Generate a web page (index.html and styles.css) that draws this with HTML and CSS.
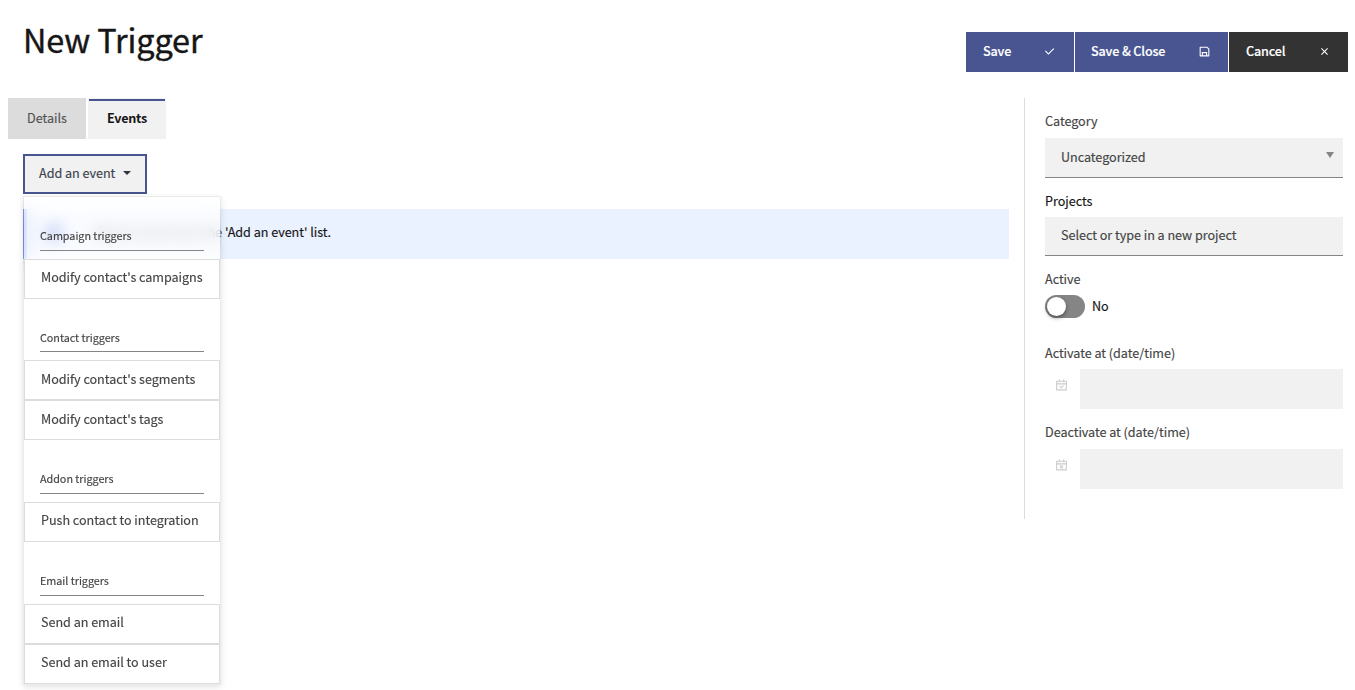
FILE: index.html
```
<!DOCTYPE html>
<html lang="en">
<head>
<meta charset="utf-8">
<title>New Trigger</title>
<link rel="stylesheet" href="styles.css">
</head>
<body>
<header class="page-header">
  <h1 class="page-title">New Trigger</h1>
  <div class="toolbar">
    <button class="btn btn-save"><span>Save</span><svg class="icon" viewBox="0 0 24 24"><path d="M10 15.17l9.19-9.19 1.42 1.41L10 18 3.64 11.64l1.41-1.42z"/></svg></button>
    <button class="btn btn-close"><span>Save &amp; Close</span><svg class="icon" viewBox="0 0 24 24"><path d="M7 19v-6h10v6h2V7.83L16.17 5H5v14h2zM4 3h13l4 4v13a1 1 0 0 1-1 1H4a1 1 0 0 1-1-1V4a1 1 0 0 1 1-1zm5 12v4h6v-4H9z"/></svg></button>
    <button class="btn btn-cancel"><span>Cancel</span><svg class="icon" viewBox="0 0 24 24"><path d="M12 10.59l4.95-4.95 1.41 1.41L13.41 12l4.95 4.95-1.41 1.41L12 13.41l-4.95 4.95-1.41-1.41L10.59 12 5.64 7.05l1.41-1.41z"/></svg></button>
  </div>
</header>
<div class="layout">
  <main class="main">
    <nav class="tabs">
      <a class="tab">Details</a>
      <a class="tab tab-active">Events</a>
    </nav>
    <section class="pane">
      <div class="dropdown">
        <button class="dropdown-toggle">Add an event<span class="caret"></span></button>
        <div class="menu">
          <h6 class="menu-header"><span>Campaign triggers</span></h6>
          <a class="menu-item">Modify contact's campaigns</a>
          <h6 class="menu-header"><span>Contact triggers</span></h6>
          <a class="menu-item">Modify contact's segments</a>
          <a class="menu-item">Modify contact's tags</a>
          <h6 class="menu-header"><span>Addon triggers</span></h6>
          <a class="menu-item">Push contact to integration</a>
          <h6 class="menu-header"><span>Email triggers</span></h6>
          <a class="menu-item">Send an email</a>
          <a class="menu-item">Send an email to user</a>
        </div>
      </div>
      <div class="notice">
        <svg class="notice-icon" viewBox="0 0 20 20"><circle cx="10" cy="10" r="8.5"/></svg>
        <p class="notice-text"><span class="notice-lead">Add an event from the</span><span>'Add an event' list.</span></p>
      </div>
    </section>
  </main>
  <aside class="sidebar">
    <label class="label">Category</label>
    <div class="field select"><span>Uncategorized</span><span class="arrow"></span></div>
    <label class="label label-dark">Projects</label>
    <div class="field field-projects"><span>Select or type in a new project</span></div>
    <label class="label label-active">Active</label>
    <div class="switch-row"><span class="switch"><span class="knob"></span></span><span class="switch-text">No</span></div>
    <label class="label label-date">Activate at (date/time)</label>
    <div class="date-row"><span class="date-addon"><svg class="icon-date" viewBox="0 0 24 24"><path d="M9 1v2h6V1h2v2h4a1 1 0 0 1 1 1v16a1 1 0 0 1-1 1H3a1 1 0 0 1-1-1V4a1 1 0 0 1 1-1h4V1h2zm11 9H4v9h16v-9zm-4.96 1.14l1.41 1.41-4.95 4.95-3.53-3.54 1.41-1.41 2.12 2.12 3.54-3.53zM7 5H4v3h16V5h-3v1h-2V5H9v1H7V5z"/></svg></span><span class="date-input"></span></div>
    <label class="label">Deactivate at (date/time)</label>
    <div class="date-row"><span class="date-addon"><svg class="icon-date" viewBox="0 0 24 24"><path d="M9 1v2h6V1h2v2h4a1 1 0 0 1 1 1v16a1 1 0 0 1-1 1H3a1 1 0 0 1-1-1V4a1 1 0 0 1 1-1h4V1h2zm11 9H4v9h16v-9zM9.88 10.96L12 13.08l2.12-2.12 1.42 1.42-2.13 2.12 2.13 2.12-1.42 1.42L12 15.92l-2.12 2.12-1.42-1.42 2.13-2.12-2.13-2.12zM7 5H4v3h16V5h-3v1h-2V5H9v1H7V5z"/></svg></span><span class="date-input"></span></div>
  </aside>
</div>
</body>
</html>
```
FILE: styles.css
```
* { box-sizing: border-box; }
body {
  margin: 0;
  height: 690px;
  overflow: hidden;
  background: #fff;
  color: #161616;
  font: 400 12.6px/18px "Noto Sans CJK SC", "Noto Sans", sans-serif;
  letter-spacing: -0.03px;
  -webkit-text-stroke: 0.15px currentColor;
}
button { font: inherit; letter-spacing: inherit; border: 0; text-align: left; }
.page-header {
  display: flex;
  justify-content: space-between;
  align-items: flex-start;
  height: 98px;
  padding: 15px 7px 0 23px;
}
.page-title { margin: 0; font-size: 32.4px; line-height: 48px; font-weight: 400; letter-spacing: -0.1px; -webkit-text-stroke: 0.4px currentColor; }
.toolbar { display: flex; gap: 1px; padding-top: 17px; }
.btn {
  display: flex;
  align-items: center;
  justify-content: space-between;
  height: 40px;
  padding: 0 17px 2px 17px;
  color: #fff;
  font-weight: 500;
  letter-spacing: -0.15px;
  background: #485590;
}
.btn-save { width: 108px; padding-right: 18px; }
.btn-close { width: 153px; padding-left: 16px; }
.btn-cancel { width: 119px; background: #333; }
.icon { width: 13px; height: 13px; margin-top: 1px; fill: #fff; }
.layout { display: flex; }
.main { width: 1024px; }
.tabs { display: flex; gap: 2px; padding-left: 8px; }
.tab {
  width: 78px;
  height: 41px;
  line-height: 40px;
  text-align: center;
  background: #dcdcdc;
  color: #525252;
}
.tab-active {
  position: relative;
  background: #f1f1f1;
  color: #161616;
  font-weight: 700;
  letter-spacing: -0.25px;
  -webkit-text-stroke: 0;
}
.tab-active::before {
  content: "";
  position: absolute;
  top: 1px;
  left: 1px;
  right: 1px;
  height: 2px;
  background: #485590;
}
.pane { padding: 15px 15px 0 23px; }
.dropdown { position: relative; height: 40px; }
.dropdown-toggle {
  display: flex;
  align-items: center;
  gap: 8px;
  width: 124px;
  height: 40px;
  padding: 0 12px 2px 14px;
  white-space: nowrap;
  background: #f1f1f1;
  border: 2px solid #485590;
  color: #3a444e;
}
.caret { border: 4px solid transparent; border-top-color: #30343c; border-bottom: 0; }
.menu {
  position: absolute;
  top: 42px;
  left: 0;
  z-index: 2;
  width: 198px;
  border: 1px solid rgba(0, 0, 0, 0.08);
  background: rgba(255, 255, 255, 0.7);
  background-clip: padding-box;
  backdrop-filter: blur(8px);
  box-shadow: 0 2px 6px rgba(0, 0, 0, 0.12);
}
.menu-header {
  height: 61.7px;
  margin: 0;
  padding: 30px 16px 0;
  font-size: 10.8px;
  line-height: 17px;
  font-weight: 400;
  letter-spacing: -0.03px;
  color: #444;
}
.menu-header span { display: block; height: 23.6px; border-bottom: 1px solid #858585; }
.menu-header:nth-of-type(n+2), .menu-item { background: #fff; }
.menu-item {
  display: block;
  height: 40px;
  padding: 0.2px 16px 0;
  border: 1px solid #dcdcdc;
  line-height: 34px;
  white-space: nowrap;
  color: #444;
}
.notice {
  display: flex;
  height: 50px;
  margin-top: 15px;
  padding: 14px 0 0 17px;
  border-left: 4px solid #4161e8;
  background: #eaf2ff;
}
.notice-icon { width: 20px; height: 20px; fill: #2b52e0; }
.notice-text { display: flex; margin: 0; color: #161616; }
.notice-lead { width: 161px; text-align: right; padding-right: 3px; }
.sidebar {
  display: flex;
  flex-direction: column;
  width: 331px;
  height: 421px;
  padding: 14px 12px 0 20px;
  border-left: 1px solid #dcdcdc;
  color: #444;
}
.label { height: 26px; }
.label-dark { height: 25px; color: #161616; }
.field {
  display: flex;
  justify-content: space-between;
  height: 40px;
  margin-bottom: 14px;
  padding: 10px 9px 0 16px;
  border-bottom: 1px solid #858585;
  background: #f1f1f1;
}
.field-projects { height: 39px; padding-top: 9px; }
.arrow { height: 0; margin-top: 4px; border: 4px solid transparent; border-top: 6px solid #858585; border-bottom: 0; }
.label-active { height: 25px; }
.switch-row { display: flex; align-items: center; gap: 7px; height: 23px; margin-bottom: 26px; color: #161616; }
.switch { width: 40px; height: 23px; padding: 2px; border-radius: 12px; background: #858585; }
.switch-text { padding-bottom: 1px; }
.knob { display: block; width: 19px; height: 19px; border-radius: 50%; background: #fff; box-shadow: 0 2px 4px rgba(0, 0, 0, 0.4); }
.label-date { height: 25px; }
.date-row { display: flex; height: 40px; margin-bottom: 14px; }
.date-addon { width: 35px; padding: 9.7px 0 0 10px; }
.icon-date { display: block; width: 13px; height: 13px; fill: #ccc; }
.date-input { flex: 1; background: #f1f1f1; }
```
